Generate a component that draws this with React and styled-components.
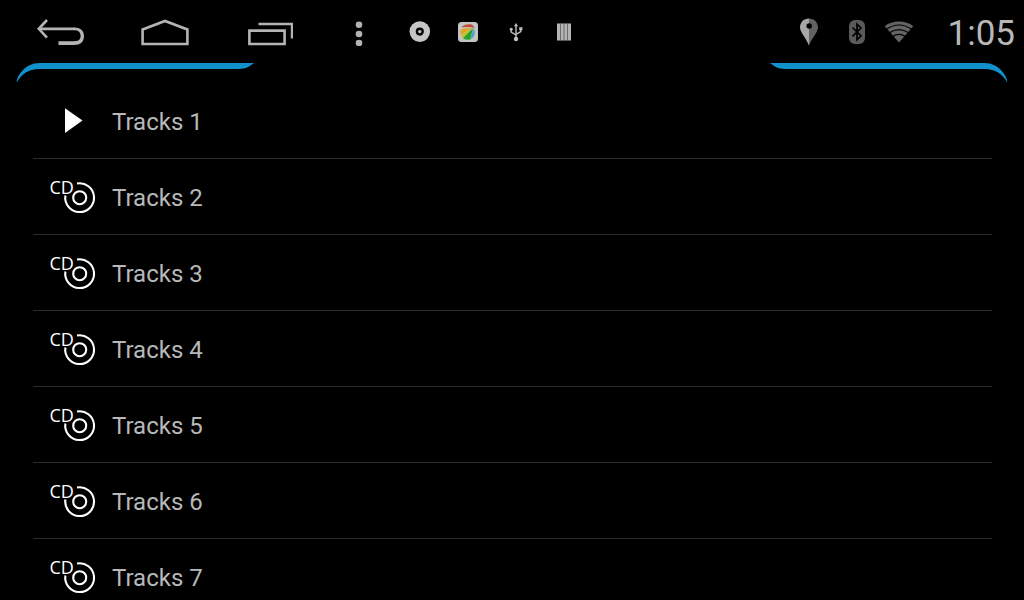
import { useState } from 'react';
import styled, { createGlobalStyle } from 'styled-components';

const GlobalStyle = createGlobalStyle`
  * {
    box-sizing: border-box;
  }

  body {
    margin: 0;
    background-color: #000;
    color: #b8b8b8;
    font-family: Roboto, 'Liberation Sans', sans-serif;
  }
`;

const Screen = styled.div`
  height: 100vh;
  overflow: hidden;
`;

const StatusBar = styled.header`
  display: flex;
  align-items: center;
  justify-content: space-between;
  height: 63px;
  padding: 0 9px;
`;

const Group = styled.div`
  display: flex;
  align-items: center;
`;

const NavButton = styled.button`
  display: flex;
  align-items: center;
  justify-content: center;
  width: ${({ $narrow }) => ($narrow ? '75px' : '104px')};
  height: 63px;
  padding: 0;
  border: none;
  background: none;
  color: #b4b4b4;
  cursor: pointer;
`;

const StatusIcon = styled.span`
  display: flex;
  align-items: center;
  justify-content: center;
  width: ${({ $narrow }) => ($narrow ? '36px' : '48px')};
  height: 63px;
`;

const Clock = styled.time`
  margin-left: 31px;
  font-size: 35px;
  line-height: 42px;
  padding-top: 4px;
`;

const Edges = styled.div`
  display: flex;
  justify-content: space-between;
  height: 20px;
  padding: 0 16px;
`;

const TrackList = styled.ul`
  margin: 0;
  padding: 0 32px 0 33px;
  list-style: none;
`;

const TrackItem = styled.li`
  border-bottom: 1px solid #2b2b2b;
`;

const TrackButton = styled.button`
  display: flex;
  align-items: center;
  gap: 15px;
  width: 100%;
  height: 75px;
  padding: 0 16px;
  border: none;
  background: none;
  color: inherit;
  font: inherit;
  text-align: left;
  cursor: pointer;
`;

const TrackName = styled.span`
  padding-top: 2px;
  font-size: 24px;
  line-height: 28px;
`;

const TrackIcon = styled.svg`
  overflow: visible;
`;

const IconLabel = styled.text`
  fill: #fff;
  font-family: 'Open Sans', 'Noto Sans', sans-serif;
  font-size: 18px;
`;

const BackIcon = () => (
  <svg width="48" height="28" viewBox="0 0 48 28" fill="none" stroke="currentColor">
    <path d="M10 2 L1.8 10.8 L10 19.6" strokeWidth="2.6" />
    <path d="M2.5 10.8 H38" strokeWidth="2.8" />
    <path
      d="M37 9.4 C43.5 9.4 47 12.5 47 18 C47 23.8 43.5 27 37 27 H21.5 V23.2 H37 C41.5 23.2 43.6 21.5 43.6 18 C43.6 14 41.5 12.2 37 12.2 Z"
      fill="currentColor"
      stroke="none"
    />
  </svg>
);

const HomeIcon = () => (
  <svg width="48" height="28" viewBox="0 0 48 28" fill="none" stroke="currentColor" strokeWidth="2.6">
    <path d="M1.6 11.5 L24 3 L46.4 11.5 V26 H1.6 Z" />
  </svg>
);

const RecentIcon = () => (
  <svg width="48" height="28" viewBox="0 0 48 28" fill="none" stroke="currentColor">
    <path d="M4.4 12.6 H39.6 V26 H4.4 Z" strokeWidth="2.6" />
    <path d="M13.5 6 H47 V20.5" strokeWidth="2.4" />
  </svg>
);

const MenuIcon = () => (
  <svg width="9" height="28" viewBox="0 0 9 28" fill="currentColor">
    <circle cx="5" cy="6.7" r="3.3" />
    <circle cx="5" cy="16" r="3.3" />
    <circle cx="5" cy="25.1" r="3.3" />
  </svg>
);

const DiscIcon = () => (
  <svg width="22" height="22" viewBox="0 0 22 22">
    <circle cx="10.8" cy="10.6" r="10.3" fill="#c6c6c6" />
    <circle cx="10.8" cy="10.6" r="2.9" fill="none" stroke="#050505" strokeWidth="2.4" />
  </svg>
);

const GalleryIcon = () => (
  <svg width="20" height="20" viewBox="0 0 20 20">
    <rect width="20" height="20" rx="3.5" fill="#c4c4c4" />
    <path d="M4 4.5 Q8 1.5 14 2.6 L17 6 Q12 4.3 4 5.2 Z" fill="#bf4a35" />
    <path d="M2.5 8 Q5 6 9 6.2 L14 6 L3 12.5 Q2 10 2.5 8 Z" fill="#dfa51f" />
    <path d="M14.5 6 L6 17 Q3.8 15.5 3 12.8 Z" fill="#c3c22e" />
    <path d="M15 6 L12.5 17.3 Q9 18.8 5 16.2 Z" fill="#27a32d" />
    <path d="M15.2 6.2 Q17.5 9 16.6 12.5 Q15.5 16 12.8 17.2 Z" fill="#4a9bd9" />
  </svg>
);

const UsbIcon = () => (
  <svg width="14" height="20" viewBox="0 0 14 20" fill="none" stroke="#c0c0c0" strokeWidth="1.4">
    <path d="M7 3 V16" />
    <path d="M2.2 8 V10.2 L7 13" />
    <path d="M11.8 7.5 V9.7 L7 12.4" />
    <path d="M7 1 L9 4.2 H5 Z" fill="#c0c0c0" stroke="none" />
    <circle cx="2.2" cy="7.3" r="1.5" fill="#c0c0c0" stroke="none" />
    <path d="M10.2 5.2 H13.4 V8.2 H10.2 Z" fill="#c0c0c0" stroke="none" />
    <circle cx="7" cy="17" r="2.2" fill="#c0c0c0" stroke="none" />
  </svg>
);

const BarsIcon = () => (
  <svg width="14" height="18" viewBox="0 0 14 18">
    <path d="M0 0.5 H14 V17.5 H0 Z" fill="#b4b4b4" />
    <path d="M3.5 0.5 V17.5 M7 0.5 V17.5 M10.5 0.5 V17.5" stroke="#585858" strokeWidth="0.8" />
  </svg>
);

const PinIcon = () => (
  <svg width="20" height="28" viewBox="0 0 20 28">
    <path d="M10 0.5 C4.5 0.5 1 4.5 1 9.3 C1 14.5 6.5 19 10 27.5 Z" fill="#a8a8a8" />
    <path d="M10 0.5 C15.5 0.5 19 4.5 19 9.3 C19 14.5 13.5 19 10 27.5 Z" fill="#626262" />
    <circle cx="10.2" cy="8" r="2.8" fill="#000" />
  </svg>
);

const BluetoothIcon = () => (
  <svg width="16" height="24" viewBox="0 0 16 24">
    <rect width="16" height="24" rx="6" fill="#5a5a5a" />
    <path
      d="M3.5 7.5 L12 15.8 L8 19.8 V4.2 L12 8 L3.5 16.3"
      fill="none"
      stroke="#000"
      strokeWidth="1.7"
    />
  </svg>
);

const WifiIcon = () => (
  <svg width="30" height="22" viewBox="0 0 30 22">
    <path d="M15 21.5 L0.8 5.2 C4.5 2.2 9.5 0.6 15 0.6 C20.5 0.6 25.5 2.2 29.2 5.2 Z" fill="#646464" />
    <path
      d="M2 8.4 Q15 -0.4 28 8.4 M5 12 Q15 5.2 25 12 M8.5 15.6 Q15 11.2 21.5 15.6"
      fill="none"
      stroke="#000"
      strokeWidth="1.2"
    />
  </svg>
);

const Edge = ({ flipped }) => (
  <svg width="239" height="20" viewBox="0 0 239 20" aria-hidden="true">
    <path
      transform={flipped ? 'translate(239 0) scale(-1 1)' : undefined}
      d="M0.6 19.6 C1 12 10 0 23 0 H238 C234 3 230 6 223 6 H24 C12 6 6 11 0.6 19.6 Z"
      fill="#1191cb"
    />
  </svg>
);

const PlayIcon = () => (
  <TrackIcon width="48" height="39" viewBox="0 0 48 39" aria-hidden="true">
    <path d="M16 7.3 L33.5 19.6 L16 32 Z" fill="#fff" />
  </TrackIcon>
);

const CdIcon = () => (
  <TrackIcon width="48" height="39" viewBox="0 0 48 39" aria-hidden="true">
    <IconLabel x="0.5" y="16.5">CD</IconLabel>
    <g fill="none" stroke="#fff" strokeWidth="2.1">
      <path d="M28 6.5 A14.4 14.4 0 1 1 16.4 18.5" />
      <circle cx="30.7" cy="20.7" r="6.5" />
    </g>
  </TrackIcon>
);

const navItems = [
  { label: 'Back', Icon: BackIcon },
  { label: 'Home', Icon: HomeIcon },
  { label: 'Recent apps', Icon: RecentIcon },
  { label: 'Menu', Icon: MenuIcon, narrow: true },
];

const notifications = [DiscIcon, GalleryIcon, UsbIcon, BarsIcon];

const tracks = [1, 2, 3, 4, 5, 6, 7];

const App = () => {
  const [playing, setPlaying] = useState(1);

  return (
    <>
      <GlobalStyle />
      <Screen>
        <StatusBar>
          <Group>
            {navItems.map(({ label, Icon, narrow }) => (
              <NavButton key={label} type="button" aria-label={label} $narrow={narrow}>
                <Icon />
              </NavButton>
            ))}
            {notifications.map((Icon, index) => (
              <StatusIcon key={index}>
                <Icon />
              </StatusIcon>
            ))}
          </Group>
          <Group>
            <StatusIcon>
              <PinIcon />
            </StatusIcon>
            <StatusIcon>
              <BluetoothIcon />
            </StatusIcon>
            <StatusIcon $narrow>
              <WifiIcon />
            </StatusIcon>
            <Clock>1:05</Clock>
          </Group>
        </StatusBar>
        <Edges>
          <Edge />
          <Edge flipped />
        </Edges>
        <TrackList>
          {tracks.map((track) => (
            <TrackItem key={track}>
              <TrackButton type="button" onClick={() => setPlaying(track)}>
                {track === playing ? <PlayIcon /> : <CdIcon />}
                <TrackName>Tracks {track}</TrackName>
              </TrackButton>
            </TrackItem>
          ))}
        </TrackList>
      </Screen>
    </>
  );
};

export default App;
